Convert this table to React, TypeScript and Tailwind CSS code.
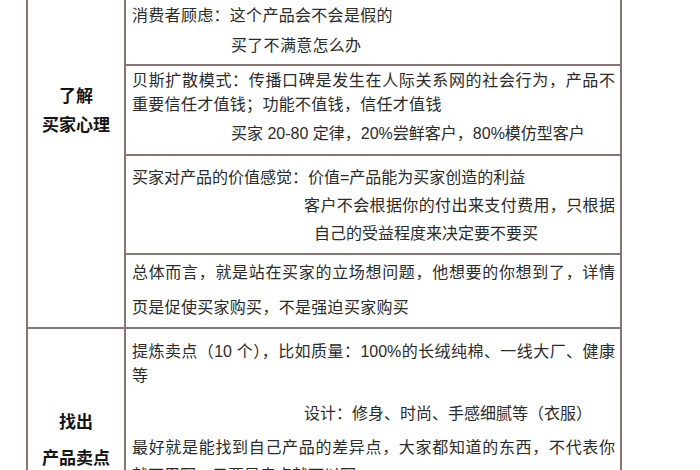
import React from "react";

const bodyFont = "font-['Liberation_Sans','Noto_Sans_CJK_SC',sans-serif]";
const labelFont = "font-['Noto_Sans_CJK_SC',sans-serif]";

const Line: React.FC<{ text: string; className?: string; full?: boolean }> = ({ text, className = "", full }) => (
  <div className={`whitespace-nowrap ${full ? "[text-align-last:justify] text-justify" : ""} ${className}`}>{text}</div>
);

const App: React.FC = () => {
  return (
    <div className={`w-[700px] h-[470px] overflow-hidden bg-white pl-[26px] ${bodyFont}`}>
      <div className="flex w-[596px] border-l-2 border-r-2 border-[#8a7573]">
        {/* left label column */}
        <div className={`flex flex-col w-[98px] shrink-0 border-r-2 border-[#8a7573] text-[17px] font-bold text-[#151515] text-center ${labelFont}`}>
          <div className="h-[327px] pt-[80px] leading-[29px]">
            <p>了解</p>
            <p>买家心理</p>
          </div>
          <div className="border-t-2 border-[#8a7573] pt-[74px] leading-[36px]">
            <p>找出</p>
            <p>产品卖点</p>
          </div>
        </div>

        {/* right content column */}
        <div className="flex flex-col flex-1 text-[16px] text-[#2b2b2b]">
          <div className="h-[64px] pl-[6px] pr-[5px] pt-[1px] leading-[30px]">
            <Line text="消费者顾虑：这个产品会不会是假的" className="tracking-[0.3px]" />
            <Line text="买了不满意怎么办" className="pl-[99px] tracking-[0.3px]" />
          </div>

          <div className="h-[90px] pl-[6px] pr-[5px] border-t-2 border-[#8a7573] pt-[3px]">
            <Line full text="贝斯扩散模式：传播口碑是发生在人际关系网的社会行为，产品不" className="leading-[24px]" />
            <Line text="重要信任才值钱；功能不值钱，信任才值钱" className="leading-[24px] tracking-[0.3px]" />
            <Line text="买家 20-80 定律，20%尝鲜客户，80%模仿型客户" className="leading-[28px] mt-[3px] pl-[99px]" />
          </div>

          <div className="h-[99px] pl-[6px] pr-[5px] border-t-2 border-[#8a7573] pt-[8px] leading-[28px]">
            <Line text="买家对产品的价值感觉：价值=产品能为买家创造的利益" />
            <Line full text="客户不会根据你的付出来支付费用，只根据" className="pl-[172px]" />
            <Line text="自己的受益程度来决定要不要买" className="pl-[182px]" />
          </div>

          <div className="h-[74px] pl-[6px] pr-[5px] border-t-2 border-[#8a7573] leading-[35px]">
            <Line full text="总体而言，就是站在买家的立场想问题，他想要的你想到了，详情" />
            <Line text="页是促使买家购买，不是强迫买家购买" className="tracking-[0.3px]" />
          </div>

          <div className="pl-[6px] pr-[5px] border-t-2 border-[#8a7573] pt-[11px]">
            <Line full text="提炼卖点（10 个），比如质量：100%的长绒纯棉、一线大厂、健康" className="leading-[24px]" />
            <Line text="等" className="leading-[24px]" />
            <Line text="设计：修身、时尚、手感细腻等（衣服）" className="leading-[28px] mt-[12px] pl-[172px]" />
            <Line full text="最好就是能找到自己产品的差异点，大家都知道的东西，不代表你" className="leading-[28px] mt-[6px]" />
            <Line text="就不用写，只要是卖点就可以写" className="leading-[28px]" />
          </div>
        </div>
      </div>
    </div>
  );
};

export default App;
